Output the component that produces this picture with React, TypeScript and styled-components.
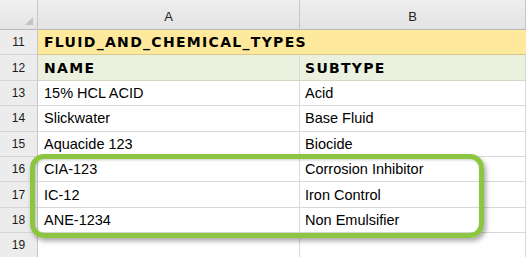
import React from "react";
import styled, { createGlobalStyle } from "styled-components";

const Global = createGlobalStyle`
  html, body { margin: 0; padding: 0; background: #ffffff; }
  body { width: 526px; height: 257px; overflow: hidden; }
`;

const Sheet = styled.div`
  position: relative;
  width: 526px;
  height: 257px;
  overflow: hidden;
  display: grid;
  grid-template-columns: 38px 262px 226px;
  grid-template-rows: 30px repeat(9, 25.4px);
  font-family: "Liberation Sans", Arial, sans-serif;
  color: #111;
  background: #fff;
`;

const Corner = styled.div`
  position: relative;
  background: linear-gradient(#f0f0f0, #e4e4e4);
  border-right: 1px solid #c6c6c6;
  border-bottom: 1px solid #b9b9b9;
  &::after {
    content: "";
    position: absolute;
    right: 4px;
    bottom: 4px;
    width: 0;
    height: 0;
    border-left: 8px solid transparent;
    border-bottom: 8px solid #c3c3c3;
  }
`;

const ColHead = styled.div`
  background: linear-gradient(#eeeeee, #e3e3e3);
  border-right: 1px solid #c6c6c6;
  border-bottom: 1px solid #b9b9b9;
  display: flex;
  align-items: center;
  justify-content: center;
  padding-top: 3px;
  box-sizing: border-box;
  font-size: 13px;
  color: #222;
`;

const RowNum = styled.div`
  background: #ececec;
  border-right: 1px solid #c6c6c6;
  border-bottom: 1px solid #d6d6d6;
  display: flex;
  align-items: center;
  justify-content: center;
  font-size: 12px;
  color: #1a1a1a;
`;

type CellKind = "title" | "head" | "plain";

const Cell = styled.div<{ $kind: CellKind; $span?: boolean; $last?: boolean }>`
  grid-column: ${(p) => (p.$span ? "2 / span 2" : "auto")};
  display: flex;
  align-items: center;
  padding-left: ${(p) => (p.$last ? "5px" : "6px")};
  box-sizing: border-box;
  white-space: nowrap;
  overflow: visible;
  border-bottom: 1px solid
    ${(p) => (p.$kind === "title" ? "#d8c88a" : p.$kind === "head" ? "#d2d7c6" : "#d9d9d9")};
  border-right: ${(p) => (p.$span ? "none" : "1px solid #d9d9d9")};
  background: ${(p) =>
    p.$kind === "title" ? "#ffe99c" : p.$kind === "head" ? "#ebf1de" : "#ffffff"};
  font-family: ${(p) =>
    p.$kind === "plain"
      ? `"Liberation Sans", Arial, sans-serif`
      : `"DejaVu Sans", Verdana, sans-serif`};
  font-weight: ${(p) => (p.$kind === "plain" ? 400 : 700)};
  font-size: ${(p) => (p.$kind === "plain" ? "14.5px" : "14px")};
  letter-spacing: ${(p) => (p.$kind === "plain" ? "0" : "1.3px")};
  color: #000;
`;

const Highlight = styled.div`
  position: absolute;
  left: 30px;
  top: 154px;
  width: 454px;
  height: 84px;
  box-sizing: border-box;
  border: 5.5px solid #8cc641;
  border-radius: 14px;
  box-shadow: 2px 3px 5px rgba(0, 0, 0, 0.35), inset 1px 1px 3px rgba(0, 0, 0, 0.2);
  pointer-events: none;
`;

const rows: { n: number; a: string; b: string }[] = [
  { n: 13, a: "15% HCL ACID", b: "Acid" },
  { n: 14, a: "Slickwater", b: "Base Fluid" },
  { n: 15, a: "Aquacide 123", b: "Biocide" },
  { n: 16, a: "CIA-123", b: "Corrosion Inhibitor" },
  { n: 17, a: "IC-12", b: "Iron Control" },
  { n: 18, a: "ANE-1234", b: "Non Emulsifier" },
  { n: 19, a: "", b: "" },
];

export default function App() {
  return (
    <>
      <Global />
      <Sheet>
        <Corner />
        <ColHead>A</ColHead>
        <ColHead>B</ColHead>

        <RowNum>11</RowNum>
        <Cell $kind="title" $span>
          FLUID_AND_CHEMICAL_TYPES
        </Cell>

        <RowNum>12</RowNum>
        <Cell $kind="head">NAME</Cell>
        <Cell $kind="head" $last>
          SUBTYPE
        </Cell>

        {rows.map((r) => (
          <React.Fragment key={r.n}>
            <RowNum>{r.n}</RowNum>
            <Cell $kind="plain">{r.a}</Cell>
            <Cell $kind="plain" $last>
              {r.b}
            </Cell>
          </React.Fragment>
        ))}
        <Highlight />
      </Sheet>
    </>
  );
}
